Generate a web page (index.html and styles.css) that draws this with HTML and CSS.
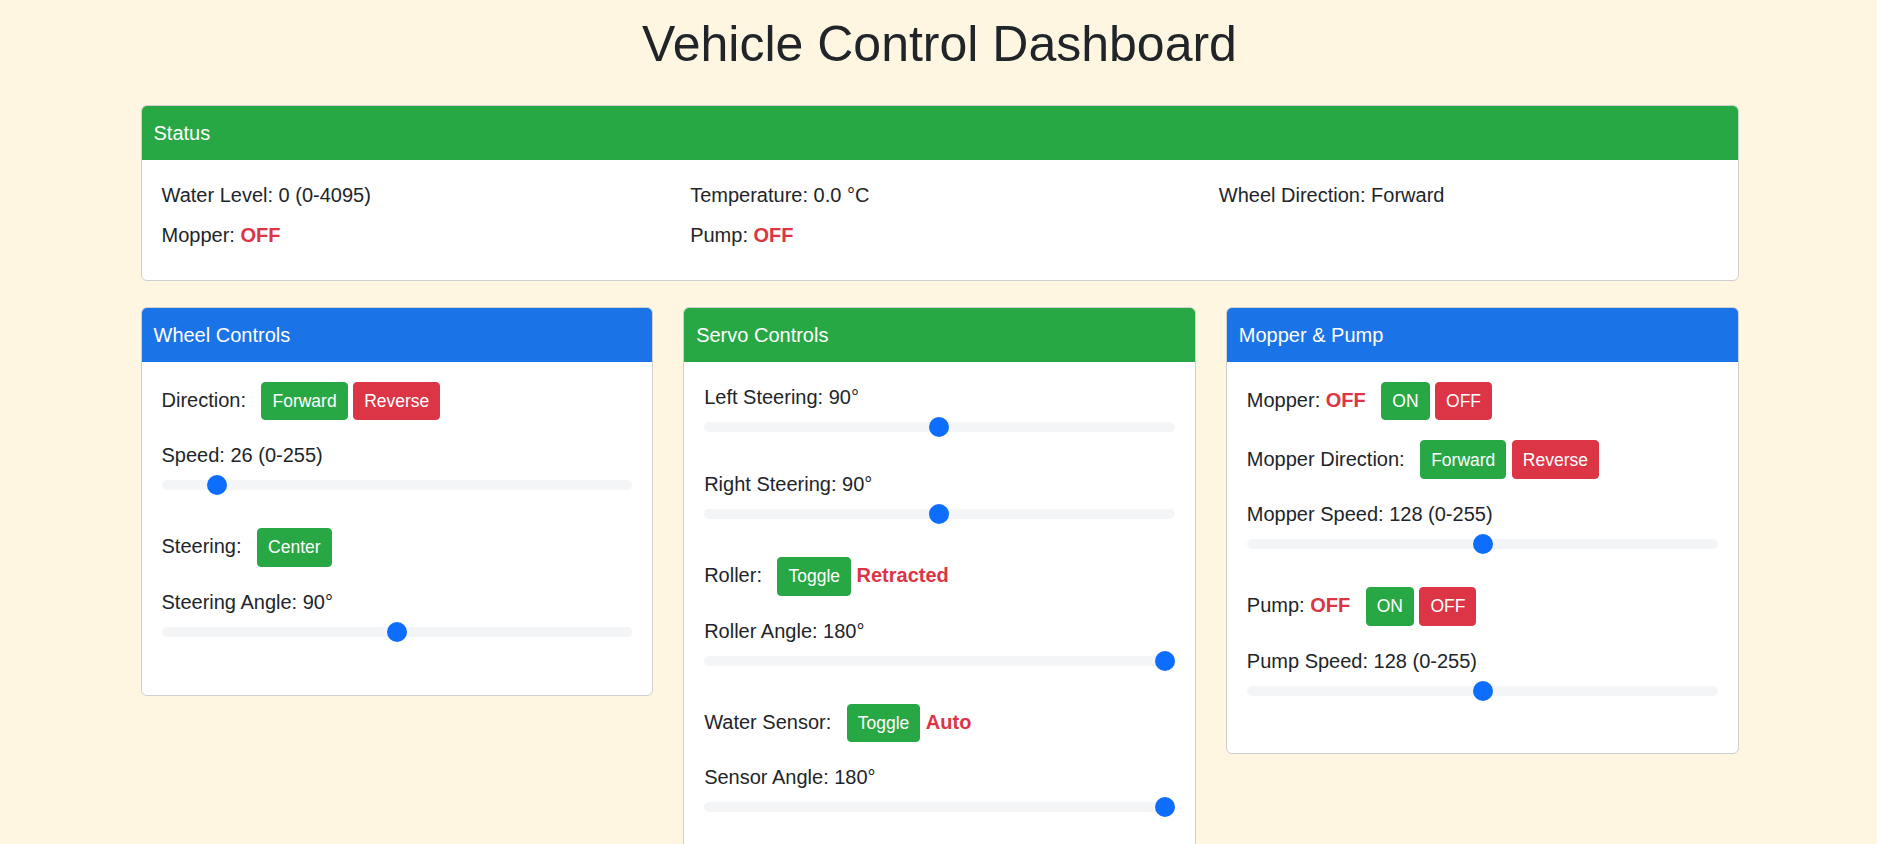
FILE: index.html
```html
<!DOCTYPE html>
<html lang="en">
<head>
<meta charset="utf-8">
<title>Vehicle Control Dashboard</title>
<link rel="stylesheet" href="styles.css">
</head>
<body>
<div class="page">
  <h1 class="title">Vehicle Control Dashboard</h1>

  <section class="card status-card">
    <div class="card-header bg-green">Status</div>
    <div class="card-body status-grid">
      <div class="status-col">
        <p>Water Level: 0 (0-4095)</p>
        <p>Mopper: <strong class="state-off">OFF</strong></p>
      </div>
      <div class="status-col">
        <p>Temperature: 0.0 °C</p>
        <p>Pump: <strong class="state-off">OFF</strong></p>
      </div>
      <div class="status-col">
        <p>Wheel Direction: Forward</p>
      </div>
    </div>
  </section>

  <div class="controls">
    <section class="card">
      <div class="card-header bg-blue">Wheel Controls</div>
      <div class="card-body">
        <div class="ctrl-row">
          <span class="ctrl-label">Direction:</span>
          <button class="btn btn-green">Forward</button>
          <button class="btn btn-red">Reverse</button>
        </div>
        <label class="slider-label">Speed: 26 (0-255)</label>
        <input class="range" type="range" min="0" max="255" value="26">
        <div class="ctrl-row">
          <span class="ctrl-label">Steering:</span>
          <button class="btn btn-green">Center</button>
        </div>
        <label class="slider-label">Steering Angle: 90°</label>
        <input class="range" type="range" min="0" max="180" value="90">
      </div>
    </section>

    <section class="card">
      <div class="card-header bg-green">Servo Controls</div>
      <div class="card-body">
        <label class="slider-label">Left Steering: 90°</label>
        <input class="range" type="range" min="0" max="180" value="90">
        <label class="slider-label">Right Steering: 90°</label>
        <input class="range" type="range" min="0" max="180" value="90">
        <div class="ctrl-row">
          <span class="ctrl-label">Roller:</span>
          <button class="btn btn-green">Toggle</button>
          <strong class="state-off">Retracted</strong>
        </div>
        <label class="slider-label">Roller Angle: 180°</label>
        <input class="range" type="range" min="0" max="180" value="180">
        <div class="ctrl-row">
          <span class="ctrl-label">Water Sensor:</span>
          <button class="btn btn-green">Toggle</button>
          <strong class="state-off">Auto</strong>
        </div>
        <label class="slider-label">Sensor Angle: 180°</label>
        <input class="range" type="range" min="0" max="180" value="180">
      </div>
    </section>

    <section class="card">
      <div class="card-header bg-blue">Mopper &amp; Pump</div>
      <div class="card-body">
        <div class="ctrl-row">
          <span class="ctrl-label">Mopper: <strong class="state-off">OFF</strong></span>
          <button class="btn btn-green">ON</button>
          <button class="btn btn-red">OFF</button>
        </div>
        <div class="ctrl-row">
          <span class="ctrl-label">Mopper Direction:</span>
          <button class="btn btn-green">Forward</button>
          <button class="btn btn-red">Reverse</button>
        </div>
        <label class="slider-label">Mopper Speed: 128 (0-255)</label>
        <input class="range" type="range" min="0" max="255" value="128">
        <div class="ctrl-row">
          <span class="ctrl-label">Pump: <strong class="state-off">OFF</strong></span>
          <button class="btn btn-green">ON</button>
          <button class="btn btn-red">OFF</button>
        </div>
        <label class="slider-label">Pump Speed: 128 (0-255)</label>
        <input class="range" type="range" min="0" max="255" value="128">
      </div>
    </section>
  </div>
</div>
</body>
</html>
```

FILE: styles.css
```css
html, body {
  margin: 0;
  padding: 0;
}

body {
  background: #fef6e0;
  color: #212529;
  font-family: "Liberation Sans", Arial, sans-serif;
  font-size: 20px;
  line-height: 1.5;
}

.page {
  width: 1598px;
  margin: 0 0 0 calc(50% - 798px);
  padding-top: 14px;
}

.title {
  margin: 0 0 30.7px;
  font-size: 50px;
  font-weight: 400;
  line-height: 1.2;
  text-align: center;
}

.card {
  background: #fff;
  border: 1px solid #cfcfcf;
  border-radius: 6px;
  overflow: hidden;
}

.card-header {
  padding: 12px 12px;
  color: #fff;
  font-size: 20px;
  line-height: 30px;
}

.bg-green { background: #28a745; }
.bg-blue { background: #1b73e8; }

.card-body {
  padding: 20px;
}

.status-card {
  margin-bottom: 26px;
}

.status-grid {
  display: grid;
  grid-template-columns: repeat(3, 1fr);
  column-gap: 30px;
}

.status-col p {
  margin: 0 0 10px;
}

.state-off {
  color: #dc3545;
  font-weight: 700;
}

.controls {
  display: grid;
  grid-template-columns: repeat(3, 1fr);
  gap: 30px;
  align-items: start;
}

.ctrl-row {
  display: flex;
  align-items: baseline;
  gap: 5.5px;
  margin-bottom: 20px;
}

.ctrl-label {
  margin-right: 10px;
}

.btn {
  font-family: inherit;
  font-size: 17.5px;
  line-height: 26.25px;
  padding: 5.25px 10px;
  border: 1px solid transparent;
  border-radius: 4px;
  color: #fff;
  margin: 0;
  cursor: pointer;
}

.btn-green {
  background: #28a745;
  border-color: #28a745;
}

.btn-red {
  background: #dc3545;
  border-color: #dc3545;
}

.slider-label {
  display: block;
  line-height: 30px;
}

.range {
  -webkit-appearance: none;
  appearance: none;
  display: block;
  width: 100%;
  height: 30px;
  margin: 0 0 27.7px;
  padding: 0;
  background: transparent;
}

.range:focus {
  outline: none;
}

.range::-webkit-slider-runnable-track {
  height: 10px;
  background: #f4f5f7;
  border-radius: 10px;
}

.range::-webkit-slider-thumb {
  -webkit-appearance: none;
  appearance: none;
  width: 20px;
  height: 20px;
  margin-top: -5px;
  border: 0;
  border-radius: 50%;
  background: #0d6efd;
}

.range::-moz-range-track {
  height: 10px;
  background: #f4f5f7;
  border-radius: 10px;
}

.range::-moz-range-thumb {
  width: 20px;
  height: 20px;
  border: 0;
  border-radius: 50%;
  background: #0d6efd;
}
```
